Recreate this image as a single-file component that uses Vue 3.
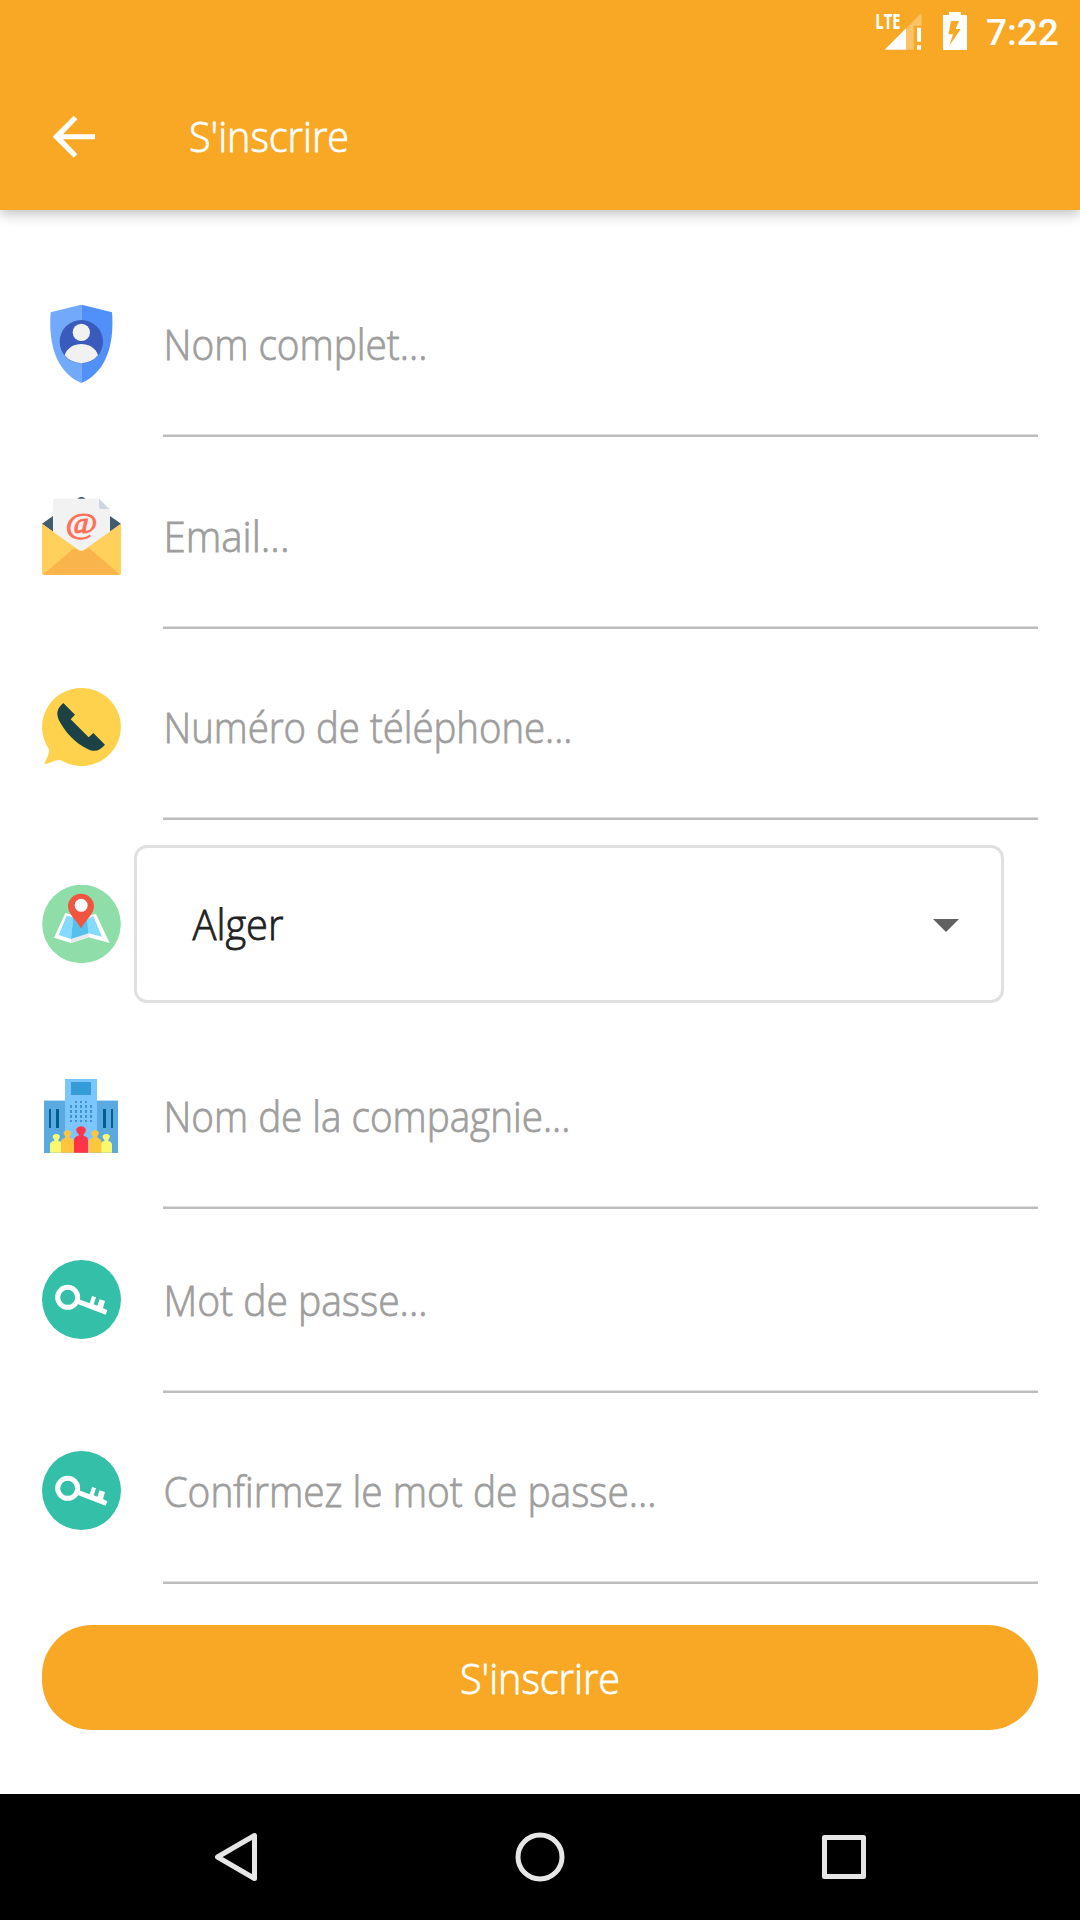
<script setup>
const fields = [
  { icon: 'shield', label: 'Nom complet...', width: 264 },
  { icon: 'mail', label: 'Email...', width: 126 },
  { icon: 'phone', label: 'Numéro de téléphone...', width: 409 },
  { icon: 'map', label: 'Alger', width: 91, select: true },
  { icon: 'building', label: 'Nom de la compagnie...', width: 407 },
  { icon: 'key', label: 'Mot de passe...', width: 264, tight: true },
  { icon: 'key', label: 'Confirmez le mot de passe...', width: 493 },
]
</script>

<template>
  <div class="screen">
    <header class="top">
      <div class="status">
        <svg class="signal" width="48" height="40" viewBox="45 35 144 120">
          <text x="46" y="87" class="lte" textLength="76" lengthAdjust="spacingAndGlyphs">LTE</text>
          <path d="M138 84L185 38V76H161V148H138Z" fill="#fff" fill-opacity=".3" />
          <path d="M74 148L138 84V148Z" fill="#fff" />
          <path d="M171 82h12v42h-12zM171 135h12v13h-12z" fill="#fff" />
        </svg>
        <svg class="battery" width="24" height="38" viewBox="249 36 72 114">
          <path fill="#fff" fill-rule="evenodd" d="M267 36h36v9h18v105h-72V45h18zM273 63L265 103H279L268 137L302 87H287L297 63Z" />
        </svg>
        <span class="clock">7:22</span>
      </div>
      <div class="bar">
        <svg class="back" width="44" height="44" viewBox="156 104 132 132">
          <path d="M285 162H189L232 117L221 106L158 169L221 232L232 222L189 177H285Z" fill="#fff" />
        </svg>
        <svg class="text title" width="170" height="60">
          <text x="0" y="42" textLength="160" lengthAdjust="spacingAndGlyphs">S'inscrire</text>
        </svg>
      </div>
    </header>

    <main class="form">
      <div v-for="(f, i) in fields" :key="i" class="row" :class="{ select: f.select, tight: f.tight, lifted: i > 3 }">
        <svg v-if="f.icon === 'shield'" class="icon" viewBox="36 45 237 237">
          <path d="M154 44L62 67C55 155 75 245 154 279Z" fill="#72a9fb" />
          <path d="M154 44L246 67C253 155 233 245 154 279Z" fill="#518ff9" />
          <circle cx="154" cy="155" r="65" fill="#3a5bbc" />
          <circle cx="154" cy="127" r="26" fill="#f1f1f2" />
          <path d="M104 196C118 151 190 151 204 196A65 65 0 0 1 104 196Z" fill="#f1f1f2" />
        </svg>
        <svg v-else-if="f.icon === 'mail'" class="icon" viewBox="36 51 237 237">
          <path d="M142 57Q154 44 167 57ZM36 131L70 107H239L273 131L239 156H70Z" fill="#435b6c" />
          <path d="M69 63Q69 56 76 56H207L240 87V190L154 216L69 190Z" fill="#f2f2f2" />
          <path d="M207 56L237 87H213Q207 87 207 80Z" fill="#cdd6e0" />
          <path d="M36 131L145 209Q154 216 163 209L273 131V279Q273 285 267 285H42Q36 285 36 279Z" fill="#ffd05c" />
          <path d="M39 284L132 204L145 210Q154 216 163 210L177 204L270 284Z" fill="#f9b54c" />
          <text x="107" y="158" class="at" textLength="95" lengthAdjust="spacingAndGlyphs">@</text>
        </svg>
        <svg v-else-if="f.icon === 'phone'" class="icon" viewBox="36 39 237 237">
          <path d="M154 39A118 117 0 1 1 95 257C83 251 69 262 42 268C49 254 60 235 56 221A118 117 0 0 1 154 39Z" fill="#ffd24d" />
          <path d="M100 84L135 119L122 133L176 187L190 174L225 209C210 226 196 233 174 223C132 202 104 169 86 134C77 110 84 99 100 84Z" fill="#1c4246" />
        </svg>
        <svg v-else-if="f.icon === 'map'" class="icon" viewBox="36 45 237 237">
          <circle cx="154.500" cy="162" r="118" fill="#8fdea9" />
          <path d="M106 129L154 140L198 132L239 219L176 202L123 219L72 203Z" fill="#fff" />
          <path d="M123 207L176 190V202L123 219Z" fill="#e6e9ee" />
          <path d="M110 137L130 142L123 207L86 195Z" fill="#84dbff" />
          <path d="M130 138L172 138L176 190L123 207Z" fill="#54c0eb" />
          <path d="M171 147L190 139L216 200L175 190Z" fill="#84dbff" />
          <path d="M153 175C139 151 114 132 114 109A39 38 0 0 1 192 109C192 132 167 151 153 175Z" fill="#f1543f" />
          <circle cx="153.500" cy="106" r="19.500" fill="#fff" />
        </svg>
        <svg v-else-if="f.icon === 'building'" class="icon" viewBox="36 34 237 237" shape-rendering="crispEdges">
          <path d="M42 106H105V264H42ZM201 106H264V264H201Z" fill="#5aaae0" />
          <path d="M42 105H105V108H42ZM201 105H264V108H201Z" fill="#b8dcf3" />
          <path d="M105 42H201V264H105Z" fill="#7cc6ff" />
          <path d="M123 51H183V90H123Z" fill="#359cd9" />
          <path d="M57 132h6v58h-6zM78 132h9v58h-9zM219 132h9v58h-9zM243 132h6v58h-6z" fill="#005f92" />
          <path d="M135 108h6v6h-6zM150 108h6v6h-6zM165 108h6v6h-6zM120 120h6v9h-6zM135 120h6v9h-6zM150 120h6v9h-6zM165 120h6v9h-6zM180 120h6v9h-6zM120 135h6v9h-6zM135 135h6v9h-6zM150 135h6v9h-6zM165 135h6v9h-6zM180 135h6v9h-6zM120 150h6v9h-6zM135 150h6v9h-6zM150 150h6v9h-6zM165 150h6v9h-6zM180 150h6v9h-6zM120 165h6v6h-6zM135 165h6v6h-6zM150 165h6v6h-6zM165 165h6v6h-6zM180 165h6v6h-6z" fill="#4094d0" />
          <g shape-rendering="auto">
            <path d="M60 264V241Q60 230 73 229V225C62 212 73 208 79 208S96 212 85 225V229Q97 231 97 241V264Z" fill="#f9f871" />
            <path d="M212 264V241Q212 231 223 229V225C211 212 223 208 229 208S246 212 235 225V229Q246 231 246 241V264Z" fill="#f9f871" />
            <path d="M93 264V231Q93 222 106 219V215C94 203 106 197 112 197S130 203 119 215V219Q132 222 132 231V264Z" fill="#ffc53c" />
            <path d="M176 264V231Q176 222 189 219V215C177 203 189 197 195 197S213 203 202 215V219Q214 222 214 231V264Z" fill="#ffc53c" />
            <path d="M132 264V226Q132 215 146 213V209C130 193 144 185 153 185S176 193 161 209V213Q174 216 174 226V264Z" fill="#ff3449" />
          </g>
        </svg>
        <svg v-else class="icon" viewBox="36 30 237 237">
          <circle cx="154.500" cy="148.500" r="118.500" fill="#33bfa8" />
          <circle cx="113" cy="142" r="30" fill="none" stroke="#fff" stroke-width="15" />
          <path d="M147 148L179 160L186 138L198 142L191 163L202 167L209 148L225 153L219 174L232 181L227 194L143 162Z" fill="#fff" />
        </svg>

        <div v-if="f.select" class="dropdown">
          <svg class="text" width="200" height="60">
            <text x="0.5" y="42" :textLength="f.width" lengthAdjust="spacingAndGlyphs">{{ f.label }}</text>
          </svg>
          <svg class="caret" width="26" height="13" viewBox="0 0 26 13"><path d="M0 0H26L13 13Z" fill="#616161" /></svg>
        </div>
        <div v-else class="field">
          <svg class="text" width="600" height="60">
            <text x="0.5" y="41" :textLength="f.width" lengthAdjust="spacingAndGlyphs">{{ f.label }}</text>
          </svg>
        </div>
      </div>
      <button class="submit">
        <svg class="text" width="160" height="60">
          <text x="0" y="46" textLength="160" lengthAdjust="spacingAndGlyphs">S'inscrire</text>
        </svg>
      </button>
    </main>

    <nav class="nav">
      <svg width="48" height="52" viewBox="0 0 48 52" fill="none" stroke="#e6e6e6" stroke-width="5" stroke-linejoin="round">
        <path d="M42.500 4.500V47.500L5.500 26Z" />
      </svg>
      <svg width="52" height="52" viewBox="0 0 52 52" fill="none" stroke="#e6e6e6" stroke-width="5">
        <circle cx="25" cy="26" r="22" />
      </svg>
      <svg width="46" height="46" viewBox="0 0 46 46" fill="none" stroke="#e6e6e6" stroke-width="5" stroke-linejoin="round">
        <path d="M3.500 3.500h39v39h-39z" />
      </svg>
    </nav>
  </div>
</template>

<style>
body {
  margin: 0;
  background: #fff;
}
</style>

<style scoped>
.screen {
  width: 1080px;
  height: 1920px;
  display: flex;
  flex-direction: column;
  overflow: hidden;
  background: #fff;
  font-family: "Open Sans", "Noto Sans", sans-serif;
}
.screen svg {
  display: block;
  flex: none;
}
.top {
  flex: none;
  height: 210px;
  background: #f9a825;
  box-shadow: 0 4px 12px rgba(0, 0, 0, 0.25);
}
.status {
  height: 63px;
  display: flex;
  align-items: flex-start;
  padding-left: 875px;
}
.screen .signal {
  margin-top: 12px;
  overflow: visible;
}
.lte {
  font: 700 66px "Open Sans", sans-serif;
  fill: #fff;
}
.at {
  font: 400 91px "Liberation Serif", serif;
  fill: #ff7058;
  stroke: #ff7058;
  stroke-width: 3px;
}
.battery {
  margin: 12px 0 0 20px;
}
.clock {
  margin: 11px 0 0 19px;
  font: 500 37px/44px Roboto, sans-serif;
  color: #fff;
}
.bar {
  height: 147px;
  display: flex;
  align-items: center;
  padding-left: 52px;
}
.screen .text {
  overflow: visible;
}
.text text {
  font-size: 42px;
  font-weight: 300;
  fill: currentColor;
  stroke: currentColor;
  stroke-width: 0.8px;
}
.title {
  margin-left: 93px;
  margin-top: 6px;
  color: #fff;
}
.form {
  flex: 1;
  padding: 35.500px 42px 0;
}
.row {
  height: 191.500px;
  display: flex;
  align-items: flex-end;
}
.row.tight {
  height: 184px;
}
.icon {
  width: 79px;
  height: 79px;
  margin-bottom: 53px;
}
.lifted .icon {
  margin-bottom: 54px;
}
.field {
  flex: 1;
  margin-left: 42px;
  height: 116px;
  border-bottom: 2px solid #bdbdbd;
  box-shadow: inset 0 -1px #dedede;
  color: #9e9e9e;
}
.row.select {
  height: 197px;
}
.dropdown {
  box-sizing: border-box;
  width: 870px;
  height: 158px;
  margin: 0 0 14px 13px;
  padding: 0 42px 0 55px;
  display: flex;
  align-items: center;
  justify-content: space-between;
  border: 3px solid #e0e0e0;
  border-radius: 13px;
  color: #212121;
}
.dropdown .text {
  margin-top: 8px;
}
.caret {
  margin-top: 2px;
}
.submit {
  width: 996px;
  height: 105px;
  margin-top: 41px;
  padding: 0;
  display: flex;
  align-items: center;
  justify-content: center;
  border: 0;
  border-radius: 50px;
  background: #f9a825;
  color: #fff;
  font-family: inherit;
}
.nav {
  flex: none;
  height: 126px;
  display: flex;
  align-items: center;
  padding: 0 213px 0 212px;
  justify-content: space-between;
  background: #000;
}
</style>
